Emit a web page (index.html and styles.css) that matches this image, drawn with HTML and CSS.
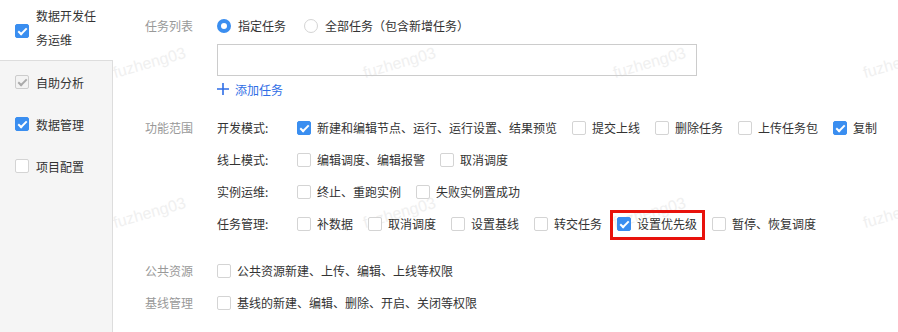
FILE: index.html
```html
<!DOCTYPE html>
<html lang="zh-CN">
<head>
  <meta charset="UTF-8" />
  <title>权限配置</title>
  <link rel="stylesheet" href="styles.css">
</head>
<body>

<div class="page">
  <!-- 水印 -->
  <span class="wm" style="left:116px;top:64px">fuzheng03</span>
  <span class="wm" style="left:366px;top:64px">fuzheng03</span>
  <span class="wm" style="left:616px;top:64px">fuzheng03</span>
  <span class="wm" style="left:866px;top:64px">fuzheng03</span>
  <span class="wm" style="left:116px;top:214px">fuzheng03</span>
  <span class="wm" style="left:366px;top:214px">fuzheng03</span>
  <span class="wm" style="left:616px;top:214px">fuzheng03</span>
  <span class="wm" style="left:866px;top:214px">fuzheng03</span>

  <div class="side">
    <div class="side-top">
      <span class="check on"></span>
      <span class="side-text">数据开发任务运维</span>
    </div>
    <div class="side-panel">
      <div class="side-item"><span class="check disabled"></span><span>自助分析</span></div>
      <div class="side-item"><span class="check on"></span><span>数据管理</span></div>
      <div class="side-item"><span class="check"></span><span>项目配置</span></div>
    </div>
  </div>

  <div class="main">
    <div class="form-row">
      <div class="form-label">任务列表</div>
      <div class="form-body">
        <div class="radios">
          <label class="opt"><span class="radio on"></span>指定任务</label>
          <label class="opt"><span class="radio"></span>全部任务（包含新增任务）</label>
        </div>
        <div class="task-box"></div>
        <div class="add-task">
          <svg width="12" height="12" viewBox="0 0 12 12"><path d="M6 0v12M0 6h12" stroke="#2f6ee6" stroke-width="1.6"/></svg>
          添加任务
        </div>
      </div>
    </div>

    <div class="form-row range">
      <div class="form-label">功能范围</div>
      <div class="form-body">
        <div class="sub-row">
          <div class="sub-label">开发模式:</div>
          <label class="opt"><span class="check on"></span>新建和编辑节点、运行、运行设置、结果预览</label>
          <label class="opt"><span class="check"></span>提交上线</label>
          <label class="opt"><span class="check"></span>删除任务</label>
          <label class="opt"><span class="check"></span>上传任务包</label>
          <label class="opt"><span class="check on"></span>复制</label>
        </div>
        <div class="sub-row">
          <div class="sub-label">线上模式:</div>
          <label class="opt"><span class="check"></span>编辑调度、编辑报警</label>
          <label class="opt"><span class="check"></span>取消调度</label>
        </div>
        <div class="sub-row">
          <div class="sub-label">实例运维:</div>
          <label class="opt"><span class="check"></span>终止、重跑实例</label>
          <label class="opt"><span class="check"></span>失败实例置成功</label>
        </div>
        <div class="sub-row">
          <div class="sub-label">任务管理:</div>
          <label class="opt"><span class="check"></span>补数据</label>
          <label class="opt"><span class="check"></span>取消调度</label>
          <label class="opt"><span class="check"></span>设置基线</label>
          <label class="opt"><span class="check"></span>转交任务</label>
          <label class="opt marked"><span class="check on"></span>设置优先级</label>
          <label class="opt"><span class="check"></span>暂停、恢复调度</label>
        </div>
      </div>
    </div>

    <div class="form-row extra">
      <div class="form-label">公共资源</div>
      <div class="form-body">
        <label class="opt"><span class="check"></span>公共资源新建、上传、编辑、上线等权限</label>
      </div>
    </div>
    <div class="form-row">
      <div class="form-label">基线管理</div>
      <div class="form-body">
        <label class="opt"><span class="check"></span>基线的新建、编辑、删除、开启、关闭等权限</label>
      </div>
    </div>
  </div>
</div>

</body>
</html>
```

FILE: styles.css
```css
body {
  margin: 0;
  font-family: "Noto Sans CJK SC", "Liberation Sans", sans-serif;
  font-size: 12px;
  color: #333;
  background: #fff;
}
.page {
  position: relative;
  display: flex;
  height: 332px;
  overflow: hidden;
}
/* 左侧模块列表 */
.side {
  position: relative;
  width: 113px;
  display: flex;
  flex-direction: column;
  flex-shrink: 0;
}
.side-top {
  height: 61px;
  display: flex;
  align-items: center;
  padding-left: 15px;
  box-sizing: border-box;
  padding-right: 12px;
}
.side-text {
  margin-left: 7px;
  line-height: 24px;
  padding-bottom: 6px;
}
.side-panel {
  flex: 1;
  background: #f5f5f5;
  border-top: 1px solid #ddd;
  border-right: 1px solid #ddd;
  margin-top: -1px;
}
.side-item {
  height: 42px;
  display: flex;
  align-items: center;
  gap: 7px;
  padding-left: 15px;
}
/* 复选框 / 单选框 */
.check {
  position: relative;
  width: 14px;
  height: 14px;
  box-sizing: border-box;
  border: 1px solid #d4d4d4;
  border-radius: 2px;
  background: #fff;
  flex-shrink: 0;
}
.check.on {
  background: #3a8ef0;
  border-color: #3a8ef0;
}
.check.on::after,
.check.disabled::after {
  content: "";
  position: absolute;
  left: 4px;
  top: 1px;
  width: 3px;
  height: 7px;
  border-right: 2px solid #fff;
  border-bottom: 2px solid #fff;
  transform: rotate(45deg);
}
.check.disabled {
  background: #f3f3f3;
  border-color: #ccc;
}
.check.disabled::after {
  border-color: #aaa;
}
.radio {
  width: 14px;
  height: 14px;
  box-sizing: border-box;
  border: 1px solid #d4d4d4;
  border-radius: 50%;
  background: #fff;
  flex-shrink: 0;
}
.radio.on {
  border: 4px solid #3a8ef0;
}
/* 右侧表单 */
.main {
  position: relative;
  flex: 1;
  padding: 10px 0 0 32px;
}
.form-row {
  display: flex;
}
.form-label {
  width: 72px;
  line-height: 32px;
  color: #999;
  flex-shrink: 0;
}
.form-body {
  flex: 1;
}
.radios {
  display: flex;
  gap: 18px;
  height: 32px;
  align-items: center;
}
.opt {
  display: flex;
  align-items: center;
  gap: 6px;
  height: 32px;
  line-height: 32px;
  white-space: nowrap;
}
.radios .opt {
  gap: 7px;
}
.task-box {
  width: 480px;
  height: 32px;
  box-sizing: border-box;
  border: 1px solid #ccc;
  margin-top: 2px;
}
.add-task {
  display: flex;
  align-items: center;
  gap: 6px;
  height: 26px;
  color: #2f6ee6;
}
.range {
  margin-top: 10px;
}
.sub-row {
  display: flex;
  gap: 15px;
  height: 32px;
}
.sub-label {
  width: 80px;
  line-height: 32px;
  margin-right: -15px;
}
.extra {
  margin-top: 15px;
}
.marked {
  position: relative;
}
.marked::before {
  content: "";
  position: absolute;
  left: -7px;
  right: -8px;
  top: 2px;
  bottom: 0;
  border: 3px solid #e8120c;
}
/* 水印：放在内容下层 */
.wm {
  position: absolute;
  z-index: 0;
  font-family: "Liberation Sans", sans-serif;
  font-size: 16px;
  color: #f0f0f0;
  transform: rotate(-16deg);
  transform-origin: left bottom;
  pointer-events: none;
  white-space: nowrap;
}
```
